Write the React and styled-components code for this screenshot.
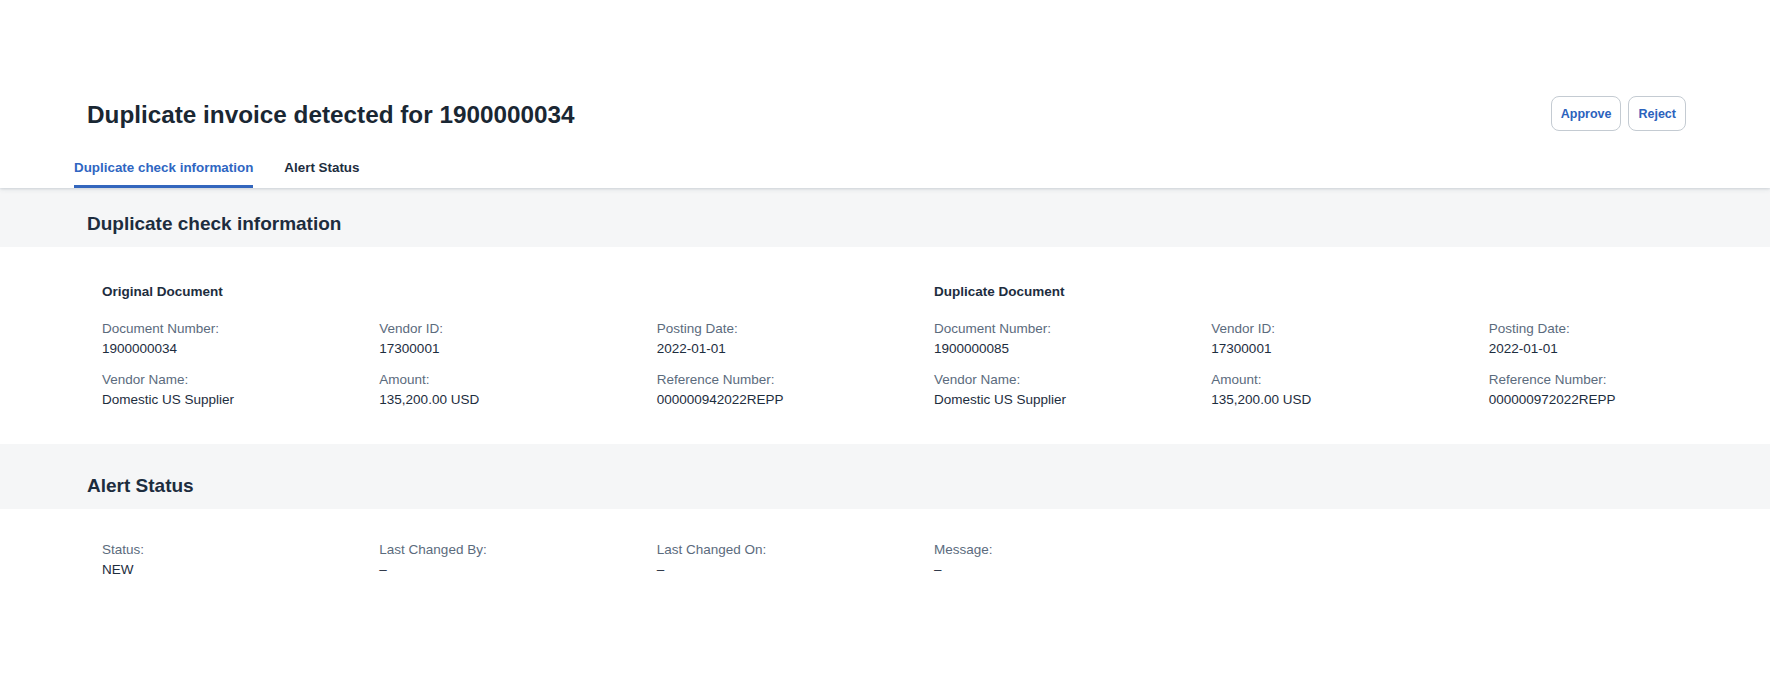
import React from "react";
import styled, { createGlobalStyle } from "styled-components";

const GlobalStyle = createGlobalStyle`
  html, body { margin: 0; padding: 0; background: #ffffff; }
  body { font-family: "Liberation Sans", Arial, sans-serif; -webkit-font-smoothing: antialiased; }
  * { box-sizing: border-box; }
`;

const Page = styled.div`
  min-height: 100vh;
  background: #ffffff;
  display: flex;
  flex-direction: column;
`;

const Header = styled.header`
  position: relative;
  z-index: 1;
  background: #ffffff;
  padding-top: 96px;
  box-shadow: 0 1px 2px rgba(34, 53, 72, 0.12), 0 2px 5px rgba(34, 53, 72, 0.07);
`;

const TitleRow = styled.div`
  display: flex;
  align-items: flex-end;
  justify-content: space-between;
  padding: 0 84px 0 87px;
`;

const Title = styled.h1`
  margin: 0;
  font-size: 24.3px;
  line-height: 32px;
  font-weight: 700;
  color: #1a2733;
`;

const Actions = styled.div`
  display: flex;
  gap: 7px;
`;

const Button = styled.button`
  height: 35px;
  padding: 0 9px;
  border: 1px solid #c4cbd2;
  border-radius: 8px;
  background: #ffffff;
  color: #2b62bd;
  font-family: "Liberation Sans", Arial, sans-serif;
  font-size: 12.5px;
  font-weight: 700;
  cursor: pointer;
`;

const TabBar = styled.nav`
  display: flex;
  gap: 31px;
  padding: 14px 74px 0;
`;

const Tab = styled.div`
  padding: 15px 0 9px;
  line-height: 16px;
  font-size: 13.4px;
  font-weight: 700;
  color: ${(p) => (p.$active ? "#2f66c2" : "#1d2d3e")};
  border-bottom: 3px solid ${(p) => (p.$active ? "#3366bd" : "transparent")};
  cursor: pointer;
`;

const Band = styled.div`
  background: #f5f6f7;
  padding: ${(p) => p.$top}px 86px 11px 87px;
`;

const SectionTitle = styled.h2`
  margin: 0;
  font-size: 19px;
  line-height: 24px;
  font-weight: 700;
  color: #1d2d3e;
`;

const Content = styled.div`
  background: #ffffff;
  padding: ${(p) => p.$top}px 4px ${(p) => p.$bottom}px 102px;
  display: grid;
  grid-template-columns: repeat(${(p) => p.$cols}, 1fr);
`;

const Group = styled.div`
  display: flex;
  flex-direction: column;
  gap: 17px;
`;

const GroupTitle = styled.h3`
  margin: 0;
  font-size: 13.5px;
  line-height: 20px;
  font-weight: 700;
  color: #1d2d3e;
`;

const FieldGrid = styled.div`
  display: grid;
  grid-template-columns: repeat(3, 1fr);
  row-gap: 11px;
`;

const Field = styled.div`
  display: flex;
  flex-direction: column;
`;

const Label = styled.span`
  font-size: 13.5px;
  line-height: 20px;
  color: #5b6b7d;
`;

const Value = styled.span`
  font-size: 13.5px;
  line-height: 20px;
  color: #1d2d3e;
`;

const FieldItem = ({ label, value }) => (
  <Field>
    <Label>{label}</Label>
    <Value>{value}</Value>
  </Field>
);

const documents = [
  {
    title: "Original Document",
    fields: [
      ["Document Number:", "1900000034"],
      ["Vendor ID:", "17300001"],
      ["Posting Date:", "2022-01-01"],
      ["Vendor Name:", "Domestic US Supplier"],
      ["Amount:", "135,200.00 USD"],
      ["Reference Number:", "000000942022REPP"],
    ],
  },
  {
    title: "Duplicate Document",
    fields: [
      ["Document Number:", "1900000085"],
      ["Vendor ID:", "17300001"],
      ["Posting Date:", "2022-01-01"],
      ["Vendor Name:", "Domestic US Supplier"],
      ["Amount:", "135,200.00 USD"],
      ["Reference Number:", "000000972022REPP"],
    ],
  },
];

const alertFields = [
  ["Status:", "NEW"],
  ["Last Changed By:", "–"],
  ["Last Changed On:", "–"],
  ["Message:", "–"],
];

export default function App() {
  return (
    <Page>
      <GlobalStyle />
      <Header>
        <TitleRow>
          <Title>Duplicate invoice detected for 1900000034</Title>
          <Actions>
            <Button>Approve</Button>
            <Button>Reject</Button>
          </Actions>
        </TitleRow>
        <TabBar>
          <Tab $active>Duplicate check information</Tab>
          <Tab>Alert Status</Tab>
        </TabBar>
      </Header>

      <Band $top={24}>
        <SectionTitle>Duplicate check information</SectionTitle>
      </Band>
      <Content $cols={2} $top={35} $bottom={34}>
        {documents.map((doc) => (
          <Group key={doc.title}>
            <GroupTitle>{doc.title}</GroupTitle>
            <FieldGrid>
              {doc.fields.map(([l, v]) => (
                <FieldItem key={l} label={l} value={v} />
              ))}
            </FieldGrid>
          </Group>
        ))}
      </Content>

      <Band $top={30}>
        <SectionTitle>Alert Status</SectionTitle>
      </Band>
      <Content $cols={6} $top={31} $bottom={40}>
        {alertFields.map(([l, v]) => (
          <FieldItem key={l} label={l} value={v} />
        ))}
      </Content>
    </Page>
  );
}
